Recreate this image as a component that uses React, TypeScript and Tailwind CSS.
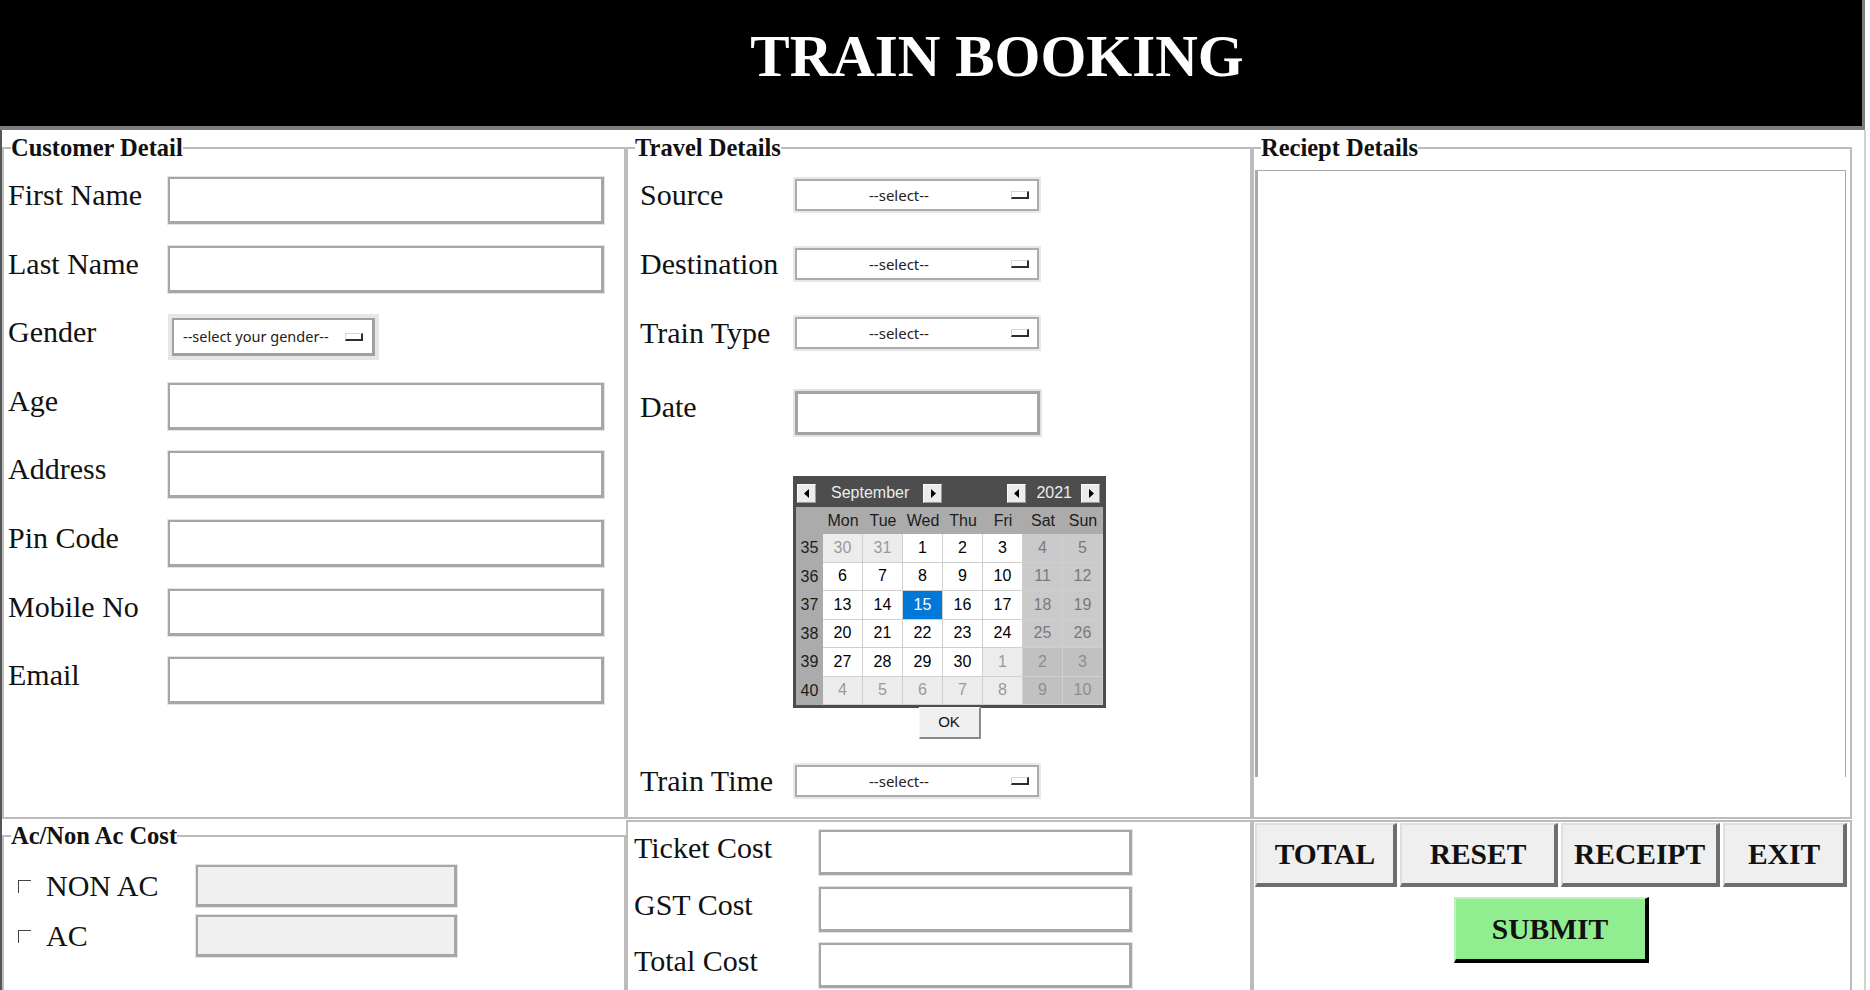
import React from 'react';

// ── shared bits ───────────────────────────────────────────────────────────────
const serif = "font-['Liberation_Serif',serif]";
const sans = "font-['Noto_Sans',sans-serif]";
const arial = "font-['Liberation_Sans',sans-serif]";

const fieldBox =
  'border-t-2 border-l-2 border-b-[3px] border-r-[3px] border-[#a6a6a6] shadow-[0_0_0_1px_#e3e3e3]';

function Legend({ children }: { children: React.ReactNode }) {
  return <legend className="ml-[7px] text-[24.5px] leading-[24px] font-bold">{children}</legend>;
}

function DropGlyph({ className = '' }: { className?: string }) {
  return (
    <span
      className={`block w-[18px] h-[8px] border-t border-l border-[#d6d6d6] border-b-2 border-r-2 border-b-[#2e2e2e] border-r-[#2e2e2e] ${className}`}
    />
  );
}

function Select() {
  return (
    <div className="w-[248px] h-[36px] border-2 border-[#e8e8e8]">
      <div className="h-full flex items-center border-2 border-[#ababab] bg-white">
        <span className={`flex-1 pr-[10px] text-center text-[15px] text-[#222] ${sans}`}>--select--</span>
        <DropGlyph className="mr-[8px]" />
      </div>
    </div>
  );
}

function Label({ children, width, pad }: { children: React.ReactNode; width: string; pad: string }) {
  return <div className={`${width} ${pad} shrink-0 text-[30px] leading-[36px]`}>{children}</div>;
}

// ── calendar ─────────────────────────────────────────────────────────────────
type Kind = 'c' | 'o' | 'w' | 'x' | 's';
const weeks: { n: number; days: [number, Kind][] }[] = [
  { n: 35, days: [[30, 'o'], [31, 'o'], [1, 'c'], [2, 'c'], [3, 'c'], [4, 'w'], [5, 'w']] },
  { n: 36, days: [[6, 'c'], [7, 'c'], [8, 'c'], [9, 'c'], [10, 'c'], [11, 'w'], [12, 'w']] },
  { n: 37, days: [[13, 'c'], [14, 'c'], [15, 's'], [16, 'c'], [17, 'c'], [18, 'w'], [19, 'w']] },
  { n: 38, days: [[20, 'c'], [21, 'c'], [22, 'c'], [23, 'c'], [24, 'c'], [25, 'w'], [26, 'w']] },
  { n: 39, days: [[27, 'c'], [28, 'c'], [29, 'c'], [30, 'c'], [1, 'o'], [2, 'x'], [3, 'x']] },
  { n: 40, days: [[4, 'o'], [5, 'o'], [6, 'o'], [7, 'o'], [8, 'o'], [9, 'x'], [10, 'x']] },
];

const cellStyle: Record<Kind, string> = {
  c: 'bg-white text-black',
  o: 'bg-[#ececec] text-[#9a9a9a]',
  w: 'bg-[#cacaca] text-[#7a7a7a]',
  x: 'bg-[#c1c1c1] text-[#8e8e8e]',
  s: 'bg-[#0078d7] text-white',
};

function ArrowBtn({ dir }: { dir: 'l' | 'r' }) {
  return (
    <span className="w-[19px] h-[19px] flex items-center justify-center bg-[#ebebeb] border border-[#fafafa] border-b-[#9a9a9a] border-r-[#9a9a9a]">
      <svg width="6" height="9" viewBox="0 0 6 9">
        {dir === 'l' ? <polygon points="5,0 5,9 0,4.5" fill="#000" /> : <polygon points="1,0 1,9 6,4.5" fill="#000" />}
      </svg>
    </span>
  );
}

function Calendar() {
  return (
    <div className={`w-[313px] h-[232px] border-[3px] border-[#4d4d4d] bg-[#4d4d4d] ${arial} text-[16px]`}>
      {/* month / year bar */}
      <div className="h-[28px] flex items-center pl-[1px] pr-[3px]">
        <ArrowBtn dir="l" />
        <span className="ml-[15px] w-[77px] text-[16px] text-[#ececec]">September</span>
        <span className="ml-[15px]"><ArrowBtn dir="r" /></span>
        <span className="ml-auto"><ArrowBtn dir="l" /></span>
        <span className="ml-[10px] text-[16px] text-[#ececec]">2021</span>
        <span className="ml-[9px]"><ArrowBtn dir="r" /></span>
      </div>
      {/* grid */}
      <div className="grid grid-cols-[27px_repeat(7,40px)] grid-rows-[27px_repeat(6,28.5px)] bg-[#ababab] text-[#1c1c1c]">
        <span />
        {['Mon', 'Tue', 'Wed', 'Thu', 'Fri', 'Sat', 'Sun'].map((d) => (
          <span key={d} className="flex items-center justify-center">{d}</span>
        ))}
        {weeks.map((w) => (
          <React.Fragment key={w.n}>
            <span className="flex items-center justify-center">{w.n}</span>
            {w.days.map(([d, k], i) => (
              <span
                key={i}
                className={`flex items-center justify-center border-r border-b border-[#cfcfcf] ${cellStyle[k]}`}
              >
                {d}
              </span>
            ))}
          </React.Fragment>
        ))}
      </div>
    </div>
  );
}

// ── page ─────────────────────────────────────────────────────────────────────
const customerRows = ['First Name', 'Last Name', 'Gender', 'Age', 'Address', 'Pin Code', 'Mobile No', 'Email'];

const actionBtn =
  'h-[64px] bg-[#efefef] border-t-2 border-l-2 border-b-4 border-r-4 border-[#dedede] border-b-[#6e6e6e] border-r-[#6e6e6e] text-[29.5px] font-bold flex items-center justify-center';

export default function App() {
  return (
    <div className={`w-[1870px] h-[990px] overflow-hidden bg-white text-[#111] ${serif}`}>
      {/* Header */}
      <header className="w-[1865px] h-[130px] bg-black border-b-4 border-r-[3px] border-[#7d7d7d] flex justify-center pt-[27px] pl-[132px]">
        <h1 className="text-[59px] leading-none font-bold text-white">TRAIN BOOKING</h1>
      </header>

      {/* Body */}
      <div className="flex w-[1866px] h-[860px] border-l-2 border-r-2 border-l-[#555] border-r-[#d2d2d2]">
        {/* ── Column 1 ── */}
        <div className="flex flex-col w-[624px] shrink-0">
          <fieldset className="shrink-0 h-[683px] mt-[6px] border-2 border-[#bcbcbc]">
            <Legend>Customer Detail</Legend>
            <div className="flex flex-col gap-[21.6px] pt-[17px]">
              {customerRows.map((r) => (
                <div key={r} className="flex items-start h-[47px]">
                  <Label width="w-[164px]" pad="pl-[4px]">{r}</Label>
                  {r === 'Gender' ? (
                    <div className="w-[211px] h-[46px] border-4 border-[#e6e6e6]">
                      <div className="h-full flex items-center bg-white border-t-2 border-l-2 border-b-[3px] border-r-[3px] border-[#a0a0a0] pl-[9px]">
                        <span className={`text-[14.5px] text-[#222] ${sans}`}>--select your gender--</span>
                        <DropGlyph className="ml-auto mr-[9px] w-[17px]" />
                      </div>
                    </div>
                  ) : (
                    <div className={`w-[436px] h-[47px] bg-white ${fieldBox}`} />
                  )}
                </div>
              ))}
            </div>
          </fieldset>

          <fieldset className="shrink-0 h-[200px] mt-[5px] border-2 border-[#bcbcbc]">
            <Legend>Ac/Non Ac Cost</Legend>
            <div className="flex flex-col gap-[8px] pt-[17px]">
              {['NON AC', 'AC'].map((r) => (
                <div key={r} className="flex items-center h-[42px] pl-[14px]">
                  <span className="w-[13px] h-[13px] shrink-0 bg-white border-t border-l border-[#454545]" />
                  <span className="ml-[15px] w-[150px] shrink-0 text-[30px] leading-none">{r}</span>
                  <div className={`w-[261px] h-[42px] bg-[#f0f0f0] ${fieldBox}`} />
                </div>
              ))}
            </div>
          </fieldset>
        </div>

        {/* ── Column 2 ── */}
        <div className="flex flex-col w-[626px] shrink-0">
          <fieldset className="shrink-0 h-[683px] mt-[6px] border-2 border-[#bcbcbc]">
            <Legend>Travel Details</Legend>
            <div className="flex flex-col pt-[17px]">
              <div className="flex items-start">
                <Label width="w-[165px]" pad="pl-[12px]">Source</Label>
                <Select />
              </div>
              <div className="flex items-start mt-[33px]">
                <Label width="w-[165px]" pad="pl-[12px]">Destination</Label>
                <Select />
              </div>
              <div className="flex items-start mt-[33px]">
                <Label width="w-[165px]" pad="pl-[12px]">Train Type</Label>
                <Select />
              </div>
              <div className="flex items-start mt-[38px]">
                <Label width="w-[165px]" pad="pl-[12px]">Date</Label>
                <div className="w-[249px] h-[48px] border-2 border-[#e4e4e4]">
                  <div className="h-full bg-white border-[3px] border-[#a4a4a4]" />
                </div>
              </div>

              {/* date picker */}
              <div className="ml-[165px] mt-[39px] w-[313px] flex flex-col items-center">
                <Calendar />
                <button
                  className={`-mt-px w-[62px] h-[32px] bg-[#efefef] border border-[#f7f7f7] border-b-2 border-r-2 border-b-[#8a8a8a] border-r-[#8a8a8a] text-[15px] text-[#111] ${arial}`}
                >
                  OK
                </button>
              </div>

              <div className="flex items-start mt-[24px]">
                <Label width="w-[165px]" pad="pl-[12px]">Train Time</Label>
                <Select />
              </div>
            </div>
          </fieldset>

          <div className="flex-1 mt-px border-t-2 border-x-2 border-[#bcbcbc] pt-[8px] flex flex-col gap-[11.5px]">
            {['Ticket Cost', 'GST Cost', 'Total Cost'].map((r) => (
              <div key={r} className="flex items-start h-[45px]">
                <Label width="w-[191px]" pad="pl-[6px]">{r}</Label>
                <div className={`w-[313px] h-[45px] bg-white ${fieldBox}`} />
              </div>
            ))}
          </div>
        </div>

        {/* ── Column 3 ── */}
        <div className="flex flex-col w-[600px] shrink-0">
          <fieldset className="shrink-0 h-[683px] mt-[6px] border-2 border-[#bcbcbc]">
            <Legend>Reciept Details</Legend>
            <div className="ml-px mt-[10px] w-[591px] h-[607px] border-t border-l-[3px] border-r border-[#a9a9a9]" />
          </fieldset>

          <div className="flex-1 mt-px border-t-2 border-x-2 border-[#bcbcbc] pt-px pl-px">
            <div className="flex gap-[3px]">
              <button className={`w-[142px] ${actionBtn}`}>TOTAL</button>
              <button className={`w-[158px] ${actionBtn}`}>RESET</button>
              <button className={`w-[159px] ${actionBtn}`}>RECEIPT</button>
              <button className={`w-[124px] ${actionBtn}`}>EXIT</button>
            </div>
            <div className="flex justify-center w-[592px] mt-[10px]">
              <button className="w-[195px] h-[66px] bg-[#90ee90] border-t-2 border-l-2 border-b-4 border-r-4 border-[#b9f5b9] border-b-black border-r-black text-[29.5px] font-bold flex items-center justify-center">
                SUBMIT
              </button>
            </div>
          </div>
        </div>
      </div>
    </div>
  );
}
